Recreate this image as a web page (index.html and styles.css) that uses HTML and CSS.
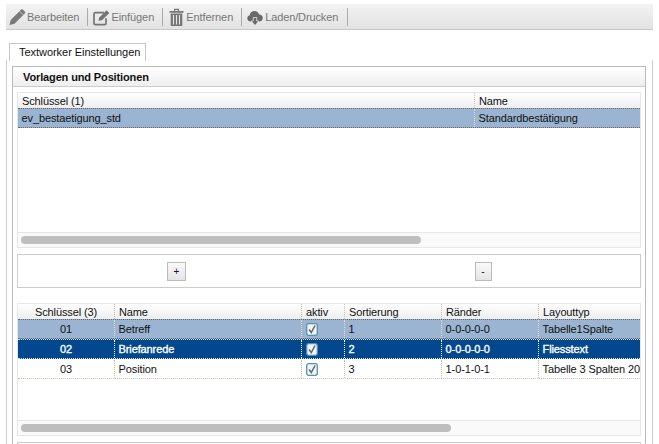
FILE: index.html
```html
<!DOCTYPE html>
<html lang="de">
<head>
<meta charset="utf-8">
<title>Textworker Einstellungen</title>
<link rel="stylesheet" href="styles.css">
</head>
<body>
<div class="toolbar">
  <div class="tool">
    <svg class="ico" width="18" height="18" viewBox="0 0 18 18"><path d="M0.500 17l1.200-5L12 1.700c.6-.6 1.400-.6 2 0l1.800 1.800c.6.6.6 1.400 0 2L5.500 15.800z" fill="#7a7a7a"/><path d="M10.600 3.100l4 4" stroke="#ececec" stroke-width=".6"/></svg>
    <span>Bearbeiten</span>
  </div>
  <div class="tool">
    <svg class="ico" width="18" height="18" viewBox="0 0 18 18"><path d="M11 4.700H2.500A1.500 1.500 0 0 0 1 6.200v9a1.500 1.500 0 0 0 1.500 1.500h9a1.500 1.500 0 0 0 1.500-1.500v-5" fill="none" stroke="#757575" stroke-width="1.700"/><path d="M5.500 12.700l.6-3L13.500 2.300l2.800 2.800L9 12.200z" fill="#757575"/></svg>
    <span>Einfügen</span>
  </div>
  <div class="tool">
    <svg class="ico" width="18" height="18" viewBox="0 0 18 18"><path d="M1.500 3h14v1.800h-14zM6 3V.8h5V3H9.800V1.900H7.200V3zM2.700 5.500h11.600V18H2.700z" fill="#757575"/><path d="M5.500 7v9.500M8.500 7v9.500M11.500 7v9.500" stroke="#e8e8e8" stroke-width="1.100"/></svg>
    <span>Entfernen</span>
  </div>
  <div class="tool tool-last">
    <svg class="ico" width="18" height="18" viewBox="0 0 18 18"><path d="M3.500 13.500C1.500 13.500.3 12 .3 10.300c0-1.500 1-2.700 2.400-3C3 4.900 4.800 3.100 7.500 3.100c2.300 0 4 1.300 4.600 3.300 2.100 0 3.700 1.500 3.700 3.500s-1.600 3.600-3.300 3.600z" fill="#696969"/><path d="M6.300 9.500h3.400v3.500h2.200L8 17.500 4.100 13h2.200z" fill="#696969" stroke="#e8e8e8" stroke-width=".8"/></svg>
    <span>Laden/Drucken</span>
  </div>
</div>
<div class="tabbar"><div class="tab">Textworker Einstellungen</div></div>
<div class="tabpanel">
  <div class="panel">
    <div class="panel-title">Vorlagen und Positionen</div>
    <div class="grid grid-top">
      <div class="row head cols-a">
        <div class="cell">Schlüssel (1)</div>
        <div class="cell">Name</div>
      </div>
      <div class="row selected cols-a">
        <div class="cell">ev_bestaetigung_std</div>
        <div class="cell">Standardbestätigung</div>
      </div>
      <div class="grid-fill"></div>
      <div class="scroll"><div class="thumb thumb-a"></div></div>
    </div>
    <div class="actions">
      <div class="action"><button class="btn btn-plus">+</button></div>
      <div class="action"><button class="btn btn-minus">-</button></div>
    </div>
    <div class="grid grid-bottom">
      <div class="row head cols-b">
        <div class="cell center">Schlüssel (3)</div>
        <div class="cell">Name</div>
        <div class="cell">aktiv</div>
        <div class="cell">Sortierung</div>
        <div class="cell">Ränder</div>
        <div class="cell">Layouttyp</div>
      </div>
      <div class="row selected cols-b">
        <div class="cell center">01</div>
        <div class="cell">Betreff</div>
        <div class="cell"><svg class="check" width="12" height="13" viewBox="0 0 12 13"><rect x=".7" y=".7" width="10.600" height="11.600" rx="2" fill="#f2f5f7" stroke="#5a8fb0" stroke-width="1.300"/><path d="M3 6.500l2.300 3L9 2.500" fill="none" stroke="#5c6b75" stroke-width="1.500"/></svg></div>
        <div class="cell">1</div>
        <div class="cell">0-0-0-0-0</div>
        <div class="cell">Tabelle1Spalte</div>
      </div>
      <div class="row active cols-b">
        <div class="cell center">02</div>
        <div class="cell">Briefanrede</div>
        <div class="cell"><svg class="check" width="12" height="13" viewBox="0 0 12 13"><rect x=".7" y=".7" width="10.600" height="11.600" rx="2" fill="#f2f5f7" stroke="#5a8fb0" stroke-width="1.300"/><path d="M3 6.500l2.300 3L9 2.500" fill="none" stroke="#5c6b75" stroke-width="1.500"/></svg></div>
        <div class="cell">2</div>
        <div class="cell">0-0-0-0-0</div>
        <div class="cell">Fliesstext</div>
      </div>
      <div class="row plain cols-b">
        <div class="cell center">03</div>
        <div class="cell">Position</div>
        <div class="cell"><svg class="check" width="12" height="13" viewBox="0 0 12 13"><rect x=".7" y=".7" width="10.600" height="11.600" rx="2" fill="#f2f5f7" stroke="#5a8fb0" stroke-width="1.300"/><path d="M3 6.500l2.300 3L9 2.500" fill="none" stroke="#5c6b75" stroke-width="1.500"/></svg></div>
        <div class="cell">3</div>
        <div class="cell">1-0-1-0-1</div>
        <div class="cell">Tabelle 3 Spalten 20/60/20</div>
      </div>
      <div class="grid-fill"></div>
      <div class="scroll"><div class="thumb thumb-b"></div></div>
    </div>
    <div class="next-panel"></div>
  </div>
</div>
</body>
</html>
```
FILE: styles.css
```css
html, body { margin: 0; padding: 0; height: 444px; overflow: hidden; background: #fff; }
body { font-family: "Liberation Sans", Arial, sans-serif; font-size: 11px; color: #111; }
.toolbar { display: flex; align-items: center; height: 25px; margin: 4px 6px 0; background: linear-gradient(#f3f3f3, #e2e2e2); border-bottom: 1px solid #c8c8c8; padding-left: 3px; color: #777; }
.tool { display: flex; align-items: center; height: 18px; padding-right: 8px; margin-right: 5px; border-right: 1px solid #aaa; letter-spacing: -0.08px; }
.tool-last { letter-spacing: -0.12px; padding-right: 9px; }
.ico { flex: none; }
.tabbar { display: flex; padding: 13px 0 0 9px; height: 17px; }
.tab { box-sizing: border-box; width: 137px; height: 18px; border: 1px solid #c6c6c6; border-bottom: 0; padding: 2px 0 0 9px; background: #fff; position: relative; z-index: 1; letter-spacing: -0.04px; }
.tabpanel { margin: 0 6px; border-left: 1px solid #ccc; border-right: 1px solid #ccc; padding: 6px 5px 0 5px; height: 384px; box-sizing: border-box; width: 647px; }
.panel { border: 1px solid #bbb; border-bottom: 0; width: 634px; box-sizing: border-box; padding: 0 4px; height: 378px; }
.panel-title { margin: 0 -4px; height: 19px; line-height: 20px; padding-left: 10px; font-weight: bold; letter-spacing: -0.13px; color: #111; border-bottom: 1px solid #ccc; background: linear-gradient(#fff, #eee); }
.grid { border: 1px solid #e6e6e6; display: flex; flex-direction: column; }
.grid-top { margin-top: 5px; height: 156px; box-sizing: border-box; }
.grid-bottom { margin-top: 15px; height: 133px; box-sizing: border-box; }
.grid-fill { flex: 1; }
.row { display: grid; height: 20px; box-sizing: border-box; align-items: stretch; letter-spacing: -0.12px; border-top: 1px dotted transparent; }
.cols-a { grid-template-columns: 456px 1fr; }
.cols-b { grid-template-columns: 96px 187px 43px 97px 97px 1fr; }
.cell { border-left: 1px dotted #c8c0ae; padding-left: 3.6px; line-height: 18px; white-space: nowrap; overflow: hidden; }
.cell:first-child { border-left: 0; }
.center { text-align: center; padding-left: 0; }
.head { height: 15px; background: linear-gradient(#fff, #eee); border-top: 0; }
.head .cell { line-height: 16px; padding-left: 4px; }
.head .center { padding-left: 0; }
.selected { background: #9ab4d2; border-top: 1px dotted #666; border-bottom: 1px dotted #666; }
.selected .cell { border-left-color: #dcdcdc; }
.active { background: #03488f; color: #fff; -webkit-text-stroke: 0.35px #fff; border-top: 1px dotted #ddd; border-bottom: 1px dotted #ddd; }
.active .cell { border-left-color: #fff; }
.plain { border-bottom: 1px dotted #c8c0ae; }
.check { display: block; margin: 3px 0 0 0; }
.scroll { height: 15px; background: #fafafa; border-top: 1px solid #e6e6e6; padding: 3px; box-sizing: border-box; }
.thumb { height: 8px; background: #bebebe; border-radius: 4px; }
.thumb-a { width: 400px; }
.thumb-b { width: 430px; }
.actions { display: grid; grid-template-columns: 1fr 1fr; margin-top: 6px; height: 34px; border: 1px solid #ccc; box-sizing: border-box; align-items: start; justify-items: center; }
.btn { display: block; margin-top: 7px; padding: 0; font: 10px "Liberation Sans", Arial, sans-serif; color: #303; height: 19px; background: linear-gradient(#fafafa, #e4e4e4); border: 1px solid #bbb; }
.btn-plus { width: 19px; margin-left: 6px; }
.btn-minus { width: 17px; margin-right: 3px; }
.next-panel { margin-top: 6px; height: 6px; border: 1px solid #ccc; border-bottom: 0; }
```
